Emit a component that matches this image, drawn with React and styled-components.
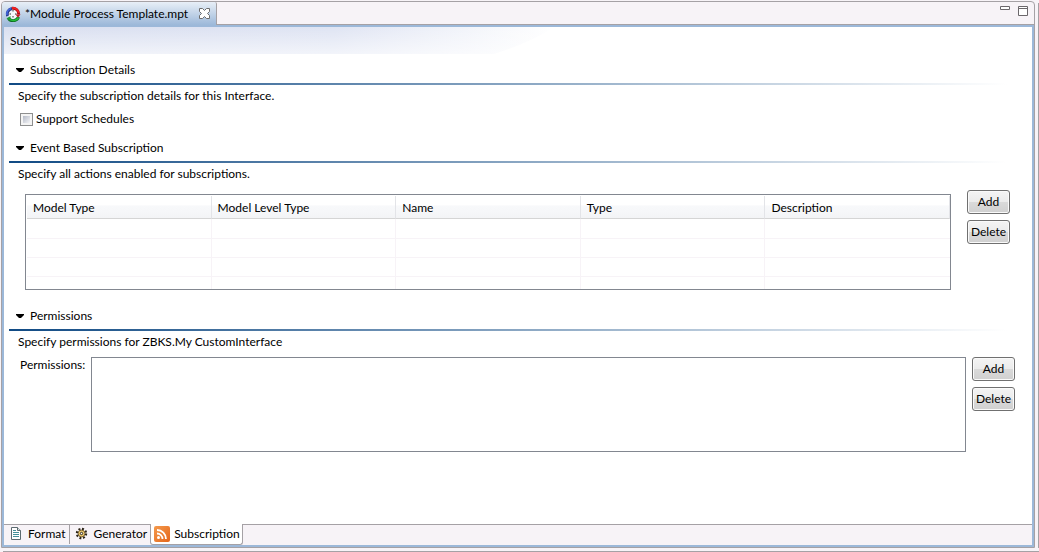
import React from "react";
import styled, { createGlobalStyle } from "styled-components";

const ink = "#000";
const edge = "#a5a1a5";
const blue = "#9cb8d9";
const shade = "#f7f3f7";

const GlobalStyle = createGlobalStyle`
  *, *::before, *::after { box-sizing: border-box; }
  body {
    margin: 0;
    background: ${shade};
    color: ${ink};
    font: 12px/16px Lato, "Open Sans", sans-serif;
    white-space: nowrap;
  }
`;

const Workbench = styled.div`
  display: flex;
  flex-direction: column;
  gap: 3px;
  min-height: 100vh;
  padding: 1px 0 0 1px;
`;

const Panes = styled.div`
  flex: 1;
  display: flex;
  gap: 3px;
`;

const RightSash = styled.div`
  width: 1px;
  margin-top: 2px;
  background: ${edge};
`;

const BottomSash = styled.div`
  height: 1px;
  margin-left: 2px;
  background: ${edge};
`;

const Editor = styled.main`
  flex: 1;
  min-width: 0;
  display: flex;
  flex-direction: column;
  border: 1px solid ${edge};
  border-radius: 4px 4px 0 0;
`;

const TabBar = styled.header`
  display: flex;
  justify-content: space-between;
  height: 23px;
`;

const EditorTab = styled.div`
  display: flex;
  align-items: center;
  gap: 4px;
  padding: 0 6px 0 3px;
  border-right: 1px solid ${edge};
  border-radius: 3px 2px 0 0;
  background: linear-gradient(#e8eff7, #9cb8d9);
`;

const TabBarRest = styled.div`
  flex: 1;
  display: flex;
  justify-content: flex-end;
  align-items: flex-start;
  gap: 8px;
  padding: 4px 6px 0 0;
  border-bottom: 1px solid ${edge};
`;

const IconButton = styled.button`
  display: flex;
  padding: 0;
  border: 0;
  background: none;
`;

const TabClose = styled(IconButton)`
  margin-left: 7px;
`;

const Body = styled.div`
  flex: 1;
  display: flex;
  flex-direction: column;
  border: 2px solid ${blue};
  background: #fff;
`;

const FormHead = styled.h1`
  position: relative;
  margin: 0;
  padding: 6px;
  height: 27px;
  font: inherit;
  line-height: 16px;
`;

const HeadSwoosh = styled.svg`
  position: absolute;
  inset: 0;
  width: 560px;
  height: 27px;
`;

const HeadText = styled.span`
  position: relative;
`;

const Sections = styled.div`
  flex: 1;
  display: flex;
  flex-direction: column;
  gap: 13px;
  padding: 8px 5px;
`;

const SectionBox = styled.section``;

const SectionTitle = styled.h2`
  display: flex;
  align-items: center;
  margin: 0;
  font: inherit;
`;

const Toggle = styled.button`
  display: flex;
  align-items: center;
  gap: 6px;
  padding: 0 7px;
  border: 0;
  background: none;
  color: inherit;
  font: inherit;
`;

const Rule = styled.div`
  height: 2px;
  margin-top: 5px;
  background: linear-gradient(to right, #104a84, #fff 98%);
`;

const Description = styled.p`
  margin: 3px 0 0 9px;
`;

const CheckLabel = styled.label`
  display: flex;
  align-items: center;
  gap: 3px;
  margin: 7px 0 0 11px;
`;

const Checkbox = styled.input`
  appearance: none;
  width: 13px;
  height: 13px;
  margin: 0;
  border: 1px solid #8e8f8f;
  background: linear-gradient(135deg, #b4b9c6, #f4f5f7) content-box, #f4f4f4;
  padding: 2px;
`;

const FieldRow = styled.div`
  display: flex;
  align-items: flex-start;
  gap: ${(p) => p.$gap}px;
  padding: ${(p) => p.$padding};
`;

const TableFrame = styled.div`
  flex: 1;
  min-width: 0;
  height: 96px;
  margin-top: 4px;
  padding: 1px 0 1px 1px;
  border: 1px solid #828790;
  overflow: hidden;
`;

const Table = styled.table`
  width: 100%;
  table-layout: fixed;
  border-collapse: separate;
  border-spacing: 0;
`;

const HeadCell = styled.th`
  height: 23px;
  padding: 2px 6px 0;
  border-right: 1px solid #e3e4e8;
  border-bottom: 1px solid #d5d5d5;
  background: linear-gradient(#fff 40%, #f8f9fb 45%, #f3f4f6);
  font-weight: normal;
  text-align: left;
`;

const Cell = styled.td`
  height: ${(p) => (p.$first ? 20 : 19)}px;
  padding: 0;
  border-bottom: 1px solid #f7f3f7;
  border-right: 1px solid #f7f3f7;
  &:last-child { border-right: 0; }
`;

const Buttons = styled.div`
  display: flex;
  flex-direction: column;
  gap: 6px;
`;

const PushButton = styled.button`
  width: 43px;
  height: 24px;
  padding: 0;
  border: 1px solid #707070;
  border-radius: 3px;
  background: linear-gradient(#f4f4f4, #ebebeb 50%, #dadada 50%, #d0d0d0);
  box-shadow: inset 0 0 0 1px #fafafa;
  color: inherit;
  font: inherit;
`;

const ListLabel = styled.label`
  width: 65px;
`;

const PermissionsField = styled.textarea`
  flex: 1;
  min-width: 0;
  height: 95px;
  padding: 2px;
  border: 1px solid #828790;
  font: inherit;
  resize: none;
`;

const PageTabs = styled.nav`
  display: flex;
  height: 21px;
  background: ${shade};
`;

const PageTab = styled.button`
  display: flex;
  align-items: center;
  gap: 4px;
  height: ${(p) => (p.$active ? 21 : 20)}px;
  padding: ${(p) => (p.$active ? "0 2px 0 3px" : "0 3px 1px 4px")};
  border: 1px solid ${edge};
  border-width: ${(p) => (p.$active ? "0 1px 1px" : "1px 0 0")};
  border-radius: ${(p) => (p.$active ? "0 0 3px 3px" : 0)};
  background: ${(p) => (p.$active ? "#fff" : "none")};
  color: inherit;
  font: inherit;
  & + &:not([aria-current]) { border-left-width: 1px; }
`;

const PageTabsRest = styled.div`
  flex: 1;
  border-top: 1px solid ${edge};
`;

const ModuleIcon = () => (
  <svg width="16" height="16" viewBox="0 0 16 16" aria-hidden="true">
    <circle cx="8" cy="8" r="5" fill="#f4f7fb" />
    <path d="M7 2.500A5.800 5.800 0 0 0 2.500 10" fill="none" stroke="#283a8c" strokeWidth="3" />
    <path d="M6 2.500A5.800 5.800 0 0 0 2 9" fill="none" stroke="#4468e0" strokeWidth="1.600" />
    <path d="M7 2.300A5.800 5.800 0 0 1 13.700 8.500" fill="none" stroke="#a80d16" strokeWidth="3" />
    <path d="M7 2A5.800 5.800 0 0 1 13.700 7" fill="none" stroke="#f52222" strokeWidth="1.600" />
    <path d="M13.500 11A5.800 5.800 0 0 1 3.500 12.500" fill="none" stroke="#0d6d22" strokeWidth="3" />
    <path d="M13.500 11.500A5.800 5.800 0 0 1 4.500 13" fill="none" stroke="#25bf3a" strokeWidth="1.600" />
    <path d="M10.500 8.500h5l-2.500 3z" fill="#c4141c" />
    <path d="M5.500 10v5l-4-2.500z" fill="#1f9a32" />
    <path d="M8 4v1.500M8 10v1.500M4.500 8H6M10 8h1.500" stroke="#333" />
  </svg>
);

const CloseIcon = () => (
  <svg width="11" height="11" viewBox="0 0 11 11" aria-hidden="true">
    <path d="M.5.5h3l2 2 2-2h3v3l-2 2 2 2v3h-3l-2-2-2 2h-3v-3l2-2-2-2z" fill="#fff" stroke="#6d6d6d" />
  </svg>
);

const MinimizeIcon = () => (
  <svg width="10" height="4" viewBox="0 0 10 4" aria-hidden="true">
    <path d="M.5.5h9v3h-9z" fill="#fff" stroke="#6b676b" />
  </svg>
);

const MaximizeIcon = () => (
  <svg width="10" height="10" viewBox="0 0 10 10" aria-hidden="true">
    <path d="M.5.5h9v9h-9zM0 2.5h10" fill="#fff" stroke="#6b676b" />
  </svg>
);

const TwistieIcon = () => (
  <svg width="8" height="4" viewBox="0 0 8 4" aria-hidden="true">
    <path d="M0 0h8v1L5 4H3L0 1z" fill="#000" />
  </svg>
);

const PageIcon = () => (
  <svg width="16" height="16" viewBox="0 0 16 16" aria-hidden="true">
    <path d="M3.500 1.500h6l3 3v9h-9z" fill="#fff" stroke="#5c6b70" />
    <path d="M9.500 1.500v3h3" fill="#dce6e8" stroke="#5c6b70" />
    <path d="M5 4.500h3M5 6.500h6M5 8.500h6M5 10.500h6" stroke="#43909a" />
  </svg>
);

const GearIcon = () => (
  <svg width="16" height="16" viewBox="0 0 16 16" aria-hidden="true">
    <circle cx="7.500" cy="7.500" r="4.600" fill="none" stroke="#2b2418" strokeWidth="2.200" strokeDasharray="1.900 1.710" />
    <circle cx="7.500" cy="7.500" r="3.400" fill="#f0cd72" stroke="#5a451c" strokeWidth=".8" />
    <circle cx="7.500" cy="7.500" r="1.200" fill="#fff" stroke="#2b2418" />
  </svg>
);

const FeedIcon = () => (
  <svg width="16" height="16" viewBox="0 0 16 16" aria-hidden="true">
    <defs>
      <linearGradient id="feed" x1="0" y1="0" x2="1" y2="1">
        <stop offset="0" stopColor="#f49a4c" />
        <stop offset="1" stopColor="#e5661c" />
      </linearGradient>
    </defs>
    <rect width="16" height="16" rx="2" fill="url(#feed)" />
    <circle cx="4.500" cy="11.500" r="1.500" fill="#fff" />
    <path d="M3 7.500a5.500 5.500 0 0 1 5.500 5.500M3 4a9 9 0 0 1 9 9" fill="none" stroke="#fff" strokeWidth="1.800" />
  </svg>
);

function Section({ title, description, children }) {
  return (
    <SectionBox>
      <SectionTitle>
        <Toggle type="button" aria-expanded="true">
          <TwistieIcon />
          {title}
        </Toggle>
      </SectionTitle>
      <Rule />
      <Description>{description}</Description>
      {children}
    </SectionBox>
  );
}

function AddDelete() {
  return (
    <Buttons>
      <PushButton type="button">Add</PushButton>
      <PushButton type="button">Delete</PushButton>
    </Buttons>
  );
}

const columns = ["Model Type", "Model Level Type", "Name", "Type", "Description"];
const emptyRows = [0, 1, 2, 3];

export default function App() {
  return (
    <>
      <GlobalStyle />
      <Workbench>
        <Panes>
          <Editor>
            <TabBar>
              <EditorTab>
                <ModuleIcon />
                *Module Process Template.mpt
                <TabClose type="button" aria-label="Close"><CloseIcon /></TabClose>
              </EditorTab>
              <TabBarRest>
                <IconButton type="button" aria-label="Minimize"><MinimizeIcon /></IconButton>
                <IconButton type="button" aria-label="Maximize"><MaximizeIcon /></IconButton>
              </TabBarRest>
            </TabBar>
            <Body>
              <FormHead>
                <HeadSwoosh viewBox="0 0 560 27" aria-hidden="true">
                  <defs>
                    <linearGradient id="head" x1="0" x2="1" y1="0" y2="0">
                      <stop offset="0" stopColor="#d9dff0" />
                      <stop offset=".6" stopColor="#dfe4f3" />
                      <stop offset="1" stopColor="#fff" />
                    </linearGradient>
                    <linearGradient id="fade" x1="0" x2="0" y1="0" y2="1">
                      <stop offset="0" stopColor="#fff" stopOpacity="0" />
                      <stop offset="1" stopColor="#fff" stopOpacity=".6" />
                    </linearGradient>
                  </defs>
                  <path d="M0 0H550Q530 14 490 27H0z" fill="url(#head)" />
                  <path d="M0 0H560V27H0z" fill="url(#fade)" />
                </HeadSwoosh>
                <HeadText>Subscription</HeadText>
              </FormHead>
              <Sections>
                <Section title="Subscription Details" description="Specify the subscription details for this Interface.">
                  <CheckLabel>
                    <Checkbox type="checkbox" />
                    Support Schedules
                  </CheckLabel>
                </Section>
                <Section title="Event Based Subscription" description="Specify all actions enabled for subscriptions.">
                  <FieldRow $gap={16} $padding="8px 17px 5px 16px">
                    <TableFrame>
                      <Table>
                        <thead>
                          <tr>{columns.map((c) => <HeadCell key={c} scope="col">{c}</HeadCell>)}</tr>
                        </thead>
                        <tbody>
                          {emptyRows.map((r) => (
                            <tr key={r}>{columns.map((c) => <Cell key={c} $first={r === 0} />)}</tr>
                          ))}
                        </tbody>
                      </Table>
                    </TableFrame>
                    <AddDelete />
                  </FieldRow>
                </Section>
                <Section title="Permissions" description="Specify permissions for ZBKS.My CustomInterface">
                  <FieldRow $gap={6} $padding="7px 12px 0 11px">
                    <ListLabel htmlFor="permissions">Permissions:</ListLabel>
                    <PermissionsField id="permissions" />
                    <AddDelete />
                  </FieldRow>
                </Section>
              </Sections>
              <PageTabs aria-label="Editor pages">
                <PageTab type="button"><PageIcon />Format</PageTab>
                <PageTab type="button"><GearIcon />Generator</PageTab>
                <PageTab type="button" $active aria-current="page"><FeedIcon />Subscription</PageTab>
                <PageTabsRest />
              </PageTabs>
            </Body>
          </Editor>
          <RightSash />
        </Panes>
        <BottomSash />
      </Workbench>
    </>
  );
}
